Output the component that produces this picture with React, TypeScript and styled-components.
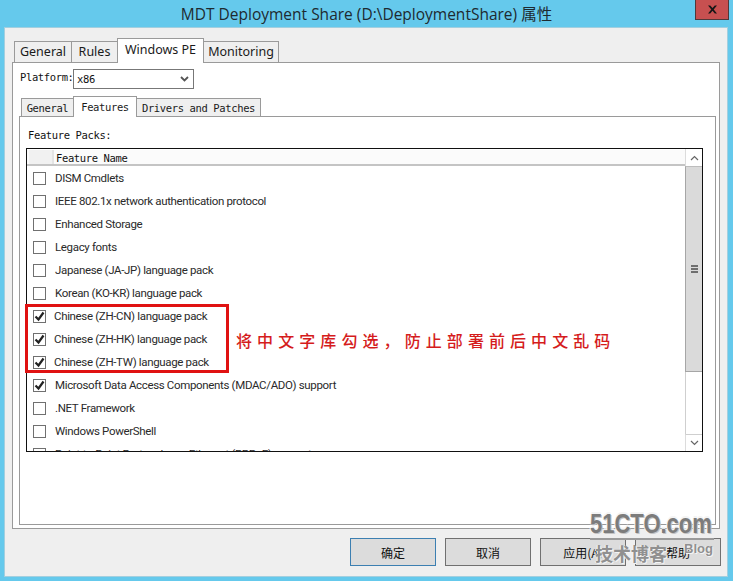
import { ReactNode } from "react";
import styled, { createGlobalStyle } from "styled-components";

const GlobalStyle = createGlobalStyle`
  html, body {
    margin: 0;
    padding: 0;
    background: #65c9ec;
  }
`;

const monoFont = `"DejaVu Sans Mono", monospace`;

const Window = styled.div`
  position: relative;
  width: 733px;
  height: 581px;
  background: #65c9ec;
  display: flex;
  flex-direction: column;
  overflow: hidden;
  font-family: "Noto Sans", "Noto Sans CJK SC", sans-serif;
`;

const TitleBar = styled.div`
  position: relative;
  height: 28px;
  flex: none;
  box-sizing: border-box;
  padding-bottom: 2px;
  display: flex;
  justify-content: center;
  align-items: center;
  font-family: "Open Sans", "Noto Sans CJK SC", sans-serif;
  font-size: 15.5px;
  color: #1e2a30;
`;

const CloseButton = styled.div`
  position: absolute;
  top: -1px;
  right: 4px;
  width: 34px;
  height: 21px;
  background: #c75050;
  border: 1px solid #51393a;
  box-sizing: border-box;
  display: flex;
  align-items: center;
  justify-content: center;
`;

const DialogBody = styled.div`
  flex: none;
  width: 722px;
  height: 548px;
  margin: 0 0 0 5px;
  box-sizing: border-box;
  background: #efefef;
  box-shadow: 0 0 0 1px #a3cfdf;
  padding: 10px 0 0 7px;
  display: flex;
  flex-direction: column;
`;

const TabStrip = styled.div<{ $small?: boolean }>`
  display: flex;
  align-items: flex-end;
  height: ${(p) => (p.$small ? 21 : 25)}px;
  flex: none;
  padding-left: 2px;
  position: relative;
  z-index: 1;
  margin-bottom: -1px;
`;

const Tab = styled.div<{ $active?: boolean; $w: number; $small?: boolean }>`
  box-sizing: border-box;
  width: ${(p) => p.$w}px;
  height: ${(p) => (p.$active ? (p.$small ? 21 : 25) : p.$small ? 19 : 22)}px;
  margin-right: -1px;
  border: 1px solid #9a9a9a;
  border-bottom: ${(p) => (p.$active ? "none" : "1px solid #9a9a9a")};
  background: ${(p) => (p.$active ? "#fff" : "#efefef")};
  position: relative;
  z-index: ${(p) => (p.$active ? 2 : 0)};
  color: #1a1a1a;
  display: flex;
  justify-content: center;
  padding-top: ${(p) => (p.$small ? (p.$active ? 2 : 1) : p.$active ? 3 : 2)}px;
  font-family: ${(p) => (p.$small ? monoFont : '"Noto Sans", sans-serif')};
  font-size: ${(p) => (p.$small ? 10.5 : 12.5)}px;
  letter-spacing: ${(p) => (p.$small ? -0.37 : 0)}px;
  line-height: 16px;
  white-space: nowrap;
`;

const OuterPage = styled.div`
  box-sizing: border-box;
  width: 708px;
  height: 467px;
  flex: none;
  background: #fff;
  border: 1px solid #9a9a9a;
  padding: 6px 3px 0 6px;
  display: flex;
  flex-direction: column;
`;

const PlatformRow = styled.div`
  display: flex;
  align-items: flex-start;
  height: 27px;
  flex: none;
  font-family: ${monoFont};
  font-size: 10.5px;
  letter-spacing: -0.37px;
  color: #111;
`;

const PlatformLabel = styled.span`
  width: 54px;
  box-sizing: border-box;
  padding-left: 1px;
  line-height: 14px;
  margin-top: 1px;
`;

const Combo = styled.div`
  box-sizing: border-box;
  width: 121px;
  height: 20px;
  border: 1px solid #777;
  background: #fff;
  display: flex;
  align-items: center;
  justify-content: space-between;
  padding: 0 4px 0 3px;
`;

const InnerPage = styled.div`
  box-sizing: border-box;
  width: 697px;
  height: 409px;
  flex: none;
  background: #fff;
  border: 1px solid #9a9a9a;
  padding: 0 0 0 6px;
  display: flex;
  flex-direction: column;
`;

const SectionLabel = styled.div`
  height: 31px;
  flex: none;
  font-family: ${monoFont};
  font-size: 10.5px;
  letter-spacing: -0.37px;
  color: #111;
  line-height: 14px;
  padding: 11px 0 0 2px;
  box-sizing: border-box;
`;

const ListFrame = styled.div`
  box-sizing: border-box;
  width: 677px;
  height: 304px;
  border: 1px solid #111;
  display: flex;
  overflow: hidden;
  background: #fff;
`;

const ListMain = styled.div`
  flex: 1;
  min-width: 0;
  display: flex;
  flex-direction: column;
  overflow: hidden;
`;

const HeaderRow = styled.div`
  height: 17px;
  flex: none;
  box-sizing: border-box;
  display: flex;
  background: #fbfbfb;
  border-bottom: 2px solid #c4c4c4;
  border-top: 1px solid #fff;
  font-family: ${monoFont};
  font-size: 10.5px;
  letter-spacing: -0.37px;
  color: #111;
  line-height: 17px;
`;

const HeaderCheckCell = styled.div`
  width: 25px;
  margin-left: 2px;
  flex: none;
  background: #f1f1f1;
  border-right: 2px solid #e4e4e4;
  box-sizing: border-box;
`;

const HeaderNameCell = styled.div`
  padding-left: 2px;
`;

const Rows = styled.div`
  padding-top: 1px;
  display: flex;
  flex-direction: column;
`;

const Row = styled.div`
  height: 23px;
  flex: none;
  display: flex;
  align-items: center;
  padding-left: 6px;
  font-family: "Roboto", sans-serif;
  font-size: 11.5px;
  letter-spacing: -0.34px;
  color: #2a2a2a;
  white-space: nowrap;
`;

const CheckBox = styled.span`
  box-sizing: border-box;
  width: 13px;
  height: 13px;
  flex: none;
  border: 1px solid #707070;
  background: #fff;
  margin-right: 8px;
  display: flex;
  align-items: center;
  justify-content: center;
`;

const RowText = styled.span<{ $shift?: boolean }>`
  margin-left: ${(p) => (p.$shift ? 0 : 1)}px;
  margin-bottom: 2px;
`;

const ScrollBar = styled.div`
  width: 17px;
  flex: none;
  background: #fff;
  display: flex;
  flex-direction: column;
  box-sizing: border-box;
`;

const ScrollArrow = styled.div`
  height: 17px;
  flex: none;
  background: #fff;
  border-left: 1px solid #dcdcdc;
  box-sizing: border-box;
  display: flex;
  align-items: center;
  justify-content: center;
`;

const ScrollThumb = styled.div`
  height: 206px;
  flex: none;
  box-sizing: border-box;
  background: #dadada;
  border-left: 1px solid #a6a6a6;
  border-bottom: 1px solid #a6a6a6;
  border-top: 1px solid #bdbdbd;
  display: flex;
  align-items: center;
  justify-content: center;
`;

const ScrollTrack = styled.div`
  flex: 1;
  background: #fff;
  border-left: 1px solid #cfcfcf;
`;

const ScrollDownArrow = styled(ScrollArrow)`
  border-top: 1px solid #cfcfcf;
`;

const Grip = styled.div`
  width: 7px;
  height: 8px;
  background: repeating-linear-gradient(
    to bottom,
    #6e6e6e 0,
    #6e6e6e 2px,
    #dadada 2px,
    #dadada 3px
  );
`;

const ButtonRow = styled.div`
  display: flex;
  gap: 9px;
  padding-left: 338px;
  margin-top: 9px;
`;

const DialogButton = styled.div<{ $primary?: boolean }>`
  box-sizing: border-box;
  width: 86px;
  height: 28px;
  background: #dcdcdc;
  border: 1px solid ${(p) => (p.$primary ? "#3c7fb1" : "#707070")};
  display: flex;
  align-items: center;
  justify-content: center;
  font-family: "Noto Sans CJK SC", sans-serif;
  font-size: 12px;
  color: #111;
`;

const Annotation = styled.div`
  position: absolute;
  left: 236px;
  top: 330px;
  font-family: "Noto Sans CJK SC", sans-serif;
  font-size: 16px;
  font-weight: 500;
  line-height: 20px;
  letter-spacing: 5.08px;
  color: #d51c1c;
  white-space: nowrap;
`;

const Highlight = styled.div`
  position: absolute;
  left: 25px;
  top: 304px;
  width: 204px;
  height: 69px;
  box-sizing: border-box;
  border: 3px solid #e01212;
`;

const Watermark = styled.div`
  position: absolute;
  left: 590px;
  top: 510px;
  width: 124px;
  height: 54px;
  font-family: "Liberation Sans", sans-serif;
  color: #7c7c7c;
`;

const WatermarkLogo = styled.div`
  font-size: 22px;
  font-weight: 700;
  line-height: 22px;
  height: 28px;
  border-bottom: 2px solid #9a9a9a;
  box-sizing: content-box;
  white-space: nowrap;
  text-shadow: 1px 1px 0 #c4c4c4, -1px 0 0 #f4f4f4, 0 -1px 0 #f4f4f4;
`;

const LogoGlyphs = styled.span`
  display: inline-block;
  transform: scaleY(1.25);
  transform-origin: 0 0;
`;

const WatermarkSub = styled.div`
  display: flex;
  align-items: flex-start;
  padding: 3px 0 0 5px;
  font-family: "Noto Sans CJK SC", sans-serif;
  font-size: 18px;
  line-height: 20px;
  font-weight: 700;
  color: #909090;
  text-shadow: 1px 1px 0 #f4f4f4, -1px 0 0 #f4f4f4;
`;

const WatermarkBlog = styled.span`
  font-family: "Liberation Sans", sans-serif;
  font-size: 13px;
  line-height: 16px;
  margin-left: 17px;
  margin-top: -2px;
`;

const CloseIcon = () => (
  <svg width="11" height="9" viewBox="0 0 11 9">
    <path
      d="M1 0.5h2.2L5.5 3l2.3-2.5H10L6.7 4.4 10 8.5H7.8L5.5 5.8 3.2 8.5H1l3.3-4.1z"
      fill="#161616"
    />
  </svg>
);

const ChevronDown = ({ color = "#555", weight = 1.8 }: { color?: string; weight?: number }) => (
  <svg width="9" height="6" viewBox="0 0 9 6">
    <path d="M1 1l3.5 3.5L8 1" fill="none" stroke={color} strokeWidth={weight} />
  </svg>
);

const ChevronUp = () => (
  <svg width="9" height="6" viewBox="0 0 9 6">
    <path d="M1 5l3.5-3.5L8 5" fill="none" stroke="#666" strokeWidth="1.2" />
  </svg>
);

const CheckMark = () => (
  <svg width="11" height="11" viewBox="0 0 11 11">
    <path d="M1.5 5.5l3 3L9.5 1.5" fill="none" stroke="#222" strokeWidth="2.2" />
  </svg>
);

const features: { name: string; checked?: boolean; shift?: boolean }[] = [
  { name: "DISM Cmdlets" },
  { name: "IEEE 802.1x network authentication protocol" },
  { name: "Enhanced Storage" },
  { name: "Legacy fonts" },
  { name: "Japanese (JA-JP) language pack" },
  { name: "Korean (KO-KR) language pack" },
  { name: "Chinese (ZH-CN) language pack", checked: true, shift: true },
  { name: "Chinese (ZH-HK) language pack", checked: true, shift: true },
  { name: "Chinese (ZH-TW) language pack", checked: true, shift: true },
  { name: "Microsoft Data Access Components (MDAC/ADO) support", checked: true },
  { name: ".NET Framework" },
  { name: "Windows PowerShell" },
  { name: "Point-to-Point Protocol over Ethernet (PPPoE) support" },
];

function FeatureRow({ children, checked, shift }: { children: ReactNode; checked?: boolean; shift?: boolean }) {
  return (
    <Row>
      <CheckBox>{checked && <CheckMark />}</CheckBox>
      <RowText $shift={shift}>{children}</RowText>
    </Row>
  );
}

export default function App() {
  return (
    <Window>
      <GlobalStyle />
      <TitleBar>
        MDT Deployment Share (D:\DeploymentShare) 属性
        <CloseButton>
          <CloseIcon />
        </CloseButton>
      </TitleBar>
      <DialogBody>
        <TabStrip>
          <Tab $w={58}>General</Tab>
          <Tab $w={47}>Rules</Tab>
          <Tab $w={87} $active>Windows PE</Tab>
          <Tab $w={76}>Monitoring</Tab>
        </TabStrip>
        <OuterPage>
          <PlatformRow>
            <PlatformLabel>Platform:</PlatformLabel>
            <Combo>
              x86
              <ChevronDown />
            </Combo>
          </PlatformRow>
          <TabStrip $small>
            <Tab $small $w={53}>General</Tab>
            <Tab $small $active $w={64}>Features</Tab>
            <Tab $small $w={125}>Drivers and Patches</Tab>
          </TabStrip>
          <InnerPage>
            <SectionLabel>Feature Packs:</SectionLabel>
            <ListFrame>
              <ListMain>
                <HeaderRow>
                  <HeaderCheckCell />
                  <HeaderNameCell>Feature Name</HeaderNameCell>
                </HeaderRow>
                <Rows>
                  {features.map((f) => (
                    <FeatureRow key={f.name} checked={f.checked} shift={f.shift}>
                      {f.name}
                    </FeatureRow>
                  ))}
                </Rows>
              </ListMain>
              <ScrollBar>
                <ScrollArrow>
                  <ChevronUp />
                </ScrollArrow>
                <ScrollThumb>
                  <Grip />
                </ScrollThumb>
                <ScrollTrack />
                <ScrollDownArrow>
                  <ChevronDown color="#666" weight={1.2} />
                </ScrollDownArrow>
              </ScrollBar>
            </ListFrame>
          </InnerPage>
        </OuterPage>
        <ButtonRow>
          <DialogButton $primary>确定</DialogButton>
          <DialogButton>取消</DialogButton>
          <DialogButton>应用(A)</DialogButton>
          <DialogButton>帮助</DialogButton>
        </ButtonRow>
      </DialogBody>
      <Highlight />
      <Annotation>将中文字库勾选，防止部署前后中文乱码</Annotation>
      <Watermark>
        <WatermarkLogo>
          <LogoGlyphs>51CTO.com</LogoGlyphs>
        </WatermarkLogo>
        <WatermarkSub>
          技术博客
          <WatermarkBlog>Blog</WatermarkBlog>
        </WatermarkSub>
      </Watermark>
    </Window>
  );
}
